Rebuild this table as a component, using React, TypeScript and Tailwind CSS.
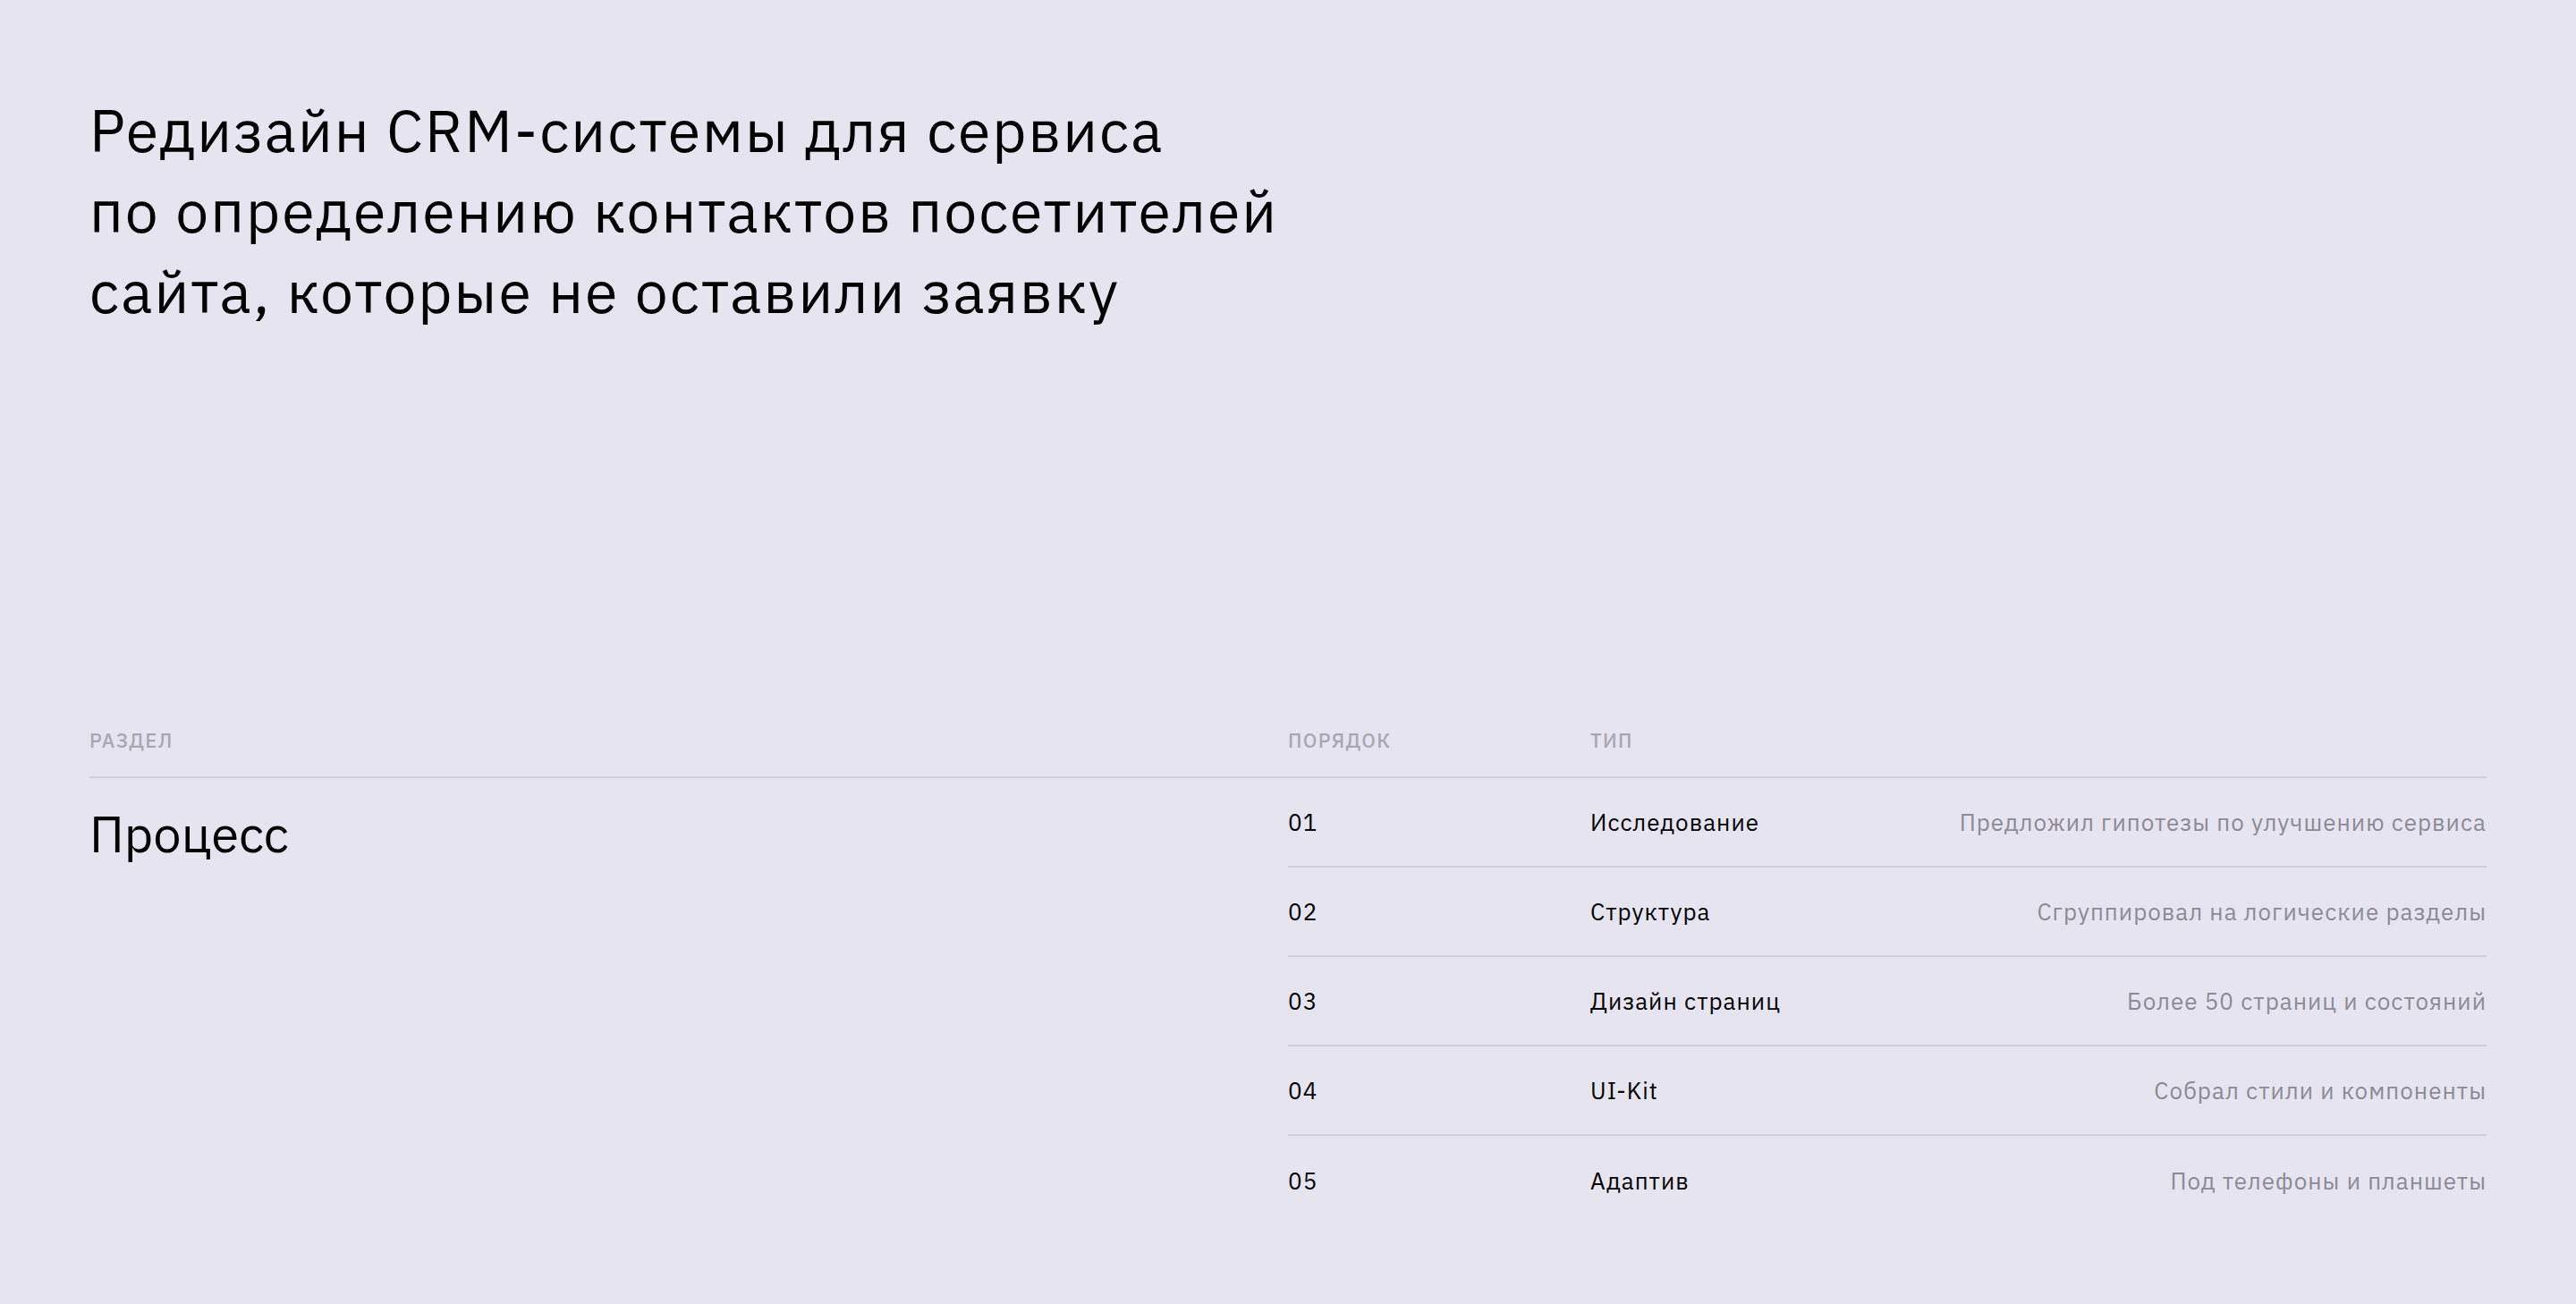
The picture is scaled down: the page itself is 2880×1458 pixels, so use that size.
const rows = [
  { n: "01", type: "Исследование", desc: "Предложил гипотезы по улучшению сервиса" },
  { n: "02", type: "Структура", desc: "Сгруппировал на логические разделы" },
  { n: "03", type: "Дизайн страниц", desc: "Более 50 страниц и состояний" },
  { n: "04", type: "UI-Kit", desc: "Собрал стили и компоненты" },
  { n: "05", type: "Адаптив", desc: "Под телефоны и планшеты" },
];

export default function App() {
  return (
    <div className="min-h-screen bg-[#e6e4ef] px-[100px] pt-[100px] pb-[88px] font-['IBM_Plex_Sans','Roboto',sans-serif] text-black">
      <h1 className="text-[66px] leading-[90px] font-normal tracking-[0.03em]">
        Редизайн CRM-системы для сервиса
        <br />
        по определению контактов посетителей
        <br />
        сайта, которые не оставили заявку
      </h1>

      <div className="mt-[443px]">
        <div className="grid grid-cols-2 border-b-2 border-[#d0ced9] pb-[25px] text-[22px] leading-[30px] font-medium uppercase tracking-[0.06em] text-[#a9a7b2]">
          <div>Раздел</div>
          <div className="flex">
            <div className="w-[338px]">Порядок</div>
            <div>Тип</div>
          </div>
        </div>

        <div className="grid grid-cols-2">
          <div className="pt-[29px] text-[56px] leading-[67px]">Процесс</div>
          <div className="flex flex-col">
            {rows.map((row, i) => (
              <div
                key={row.n}
                className={`flex h-[100px] items-center text-[26px] tracking-[0.04em] ${
                  i < rows.length - 1 ? "border-b-2 border-[#d0ced9]" : ""
                }`}
              >
                <div className="w-[338px]">{row.n}</div>
                <div className="flex-1">{row.type}</div>
                <div className="text-right text-[#8c8a94]">{row.desc}</div>
              </div>
            ))}
          </div>
        </div>
      </div>
    </div>
  );
}
